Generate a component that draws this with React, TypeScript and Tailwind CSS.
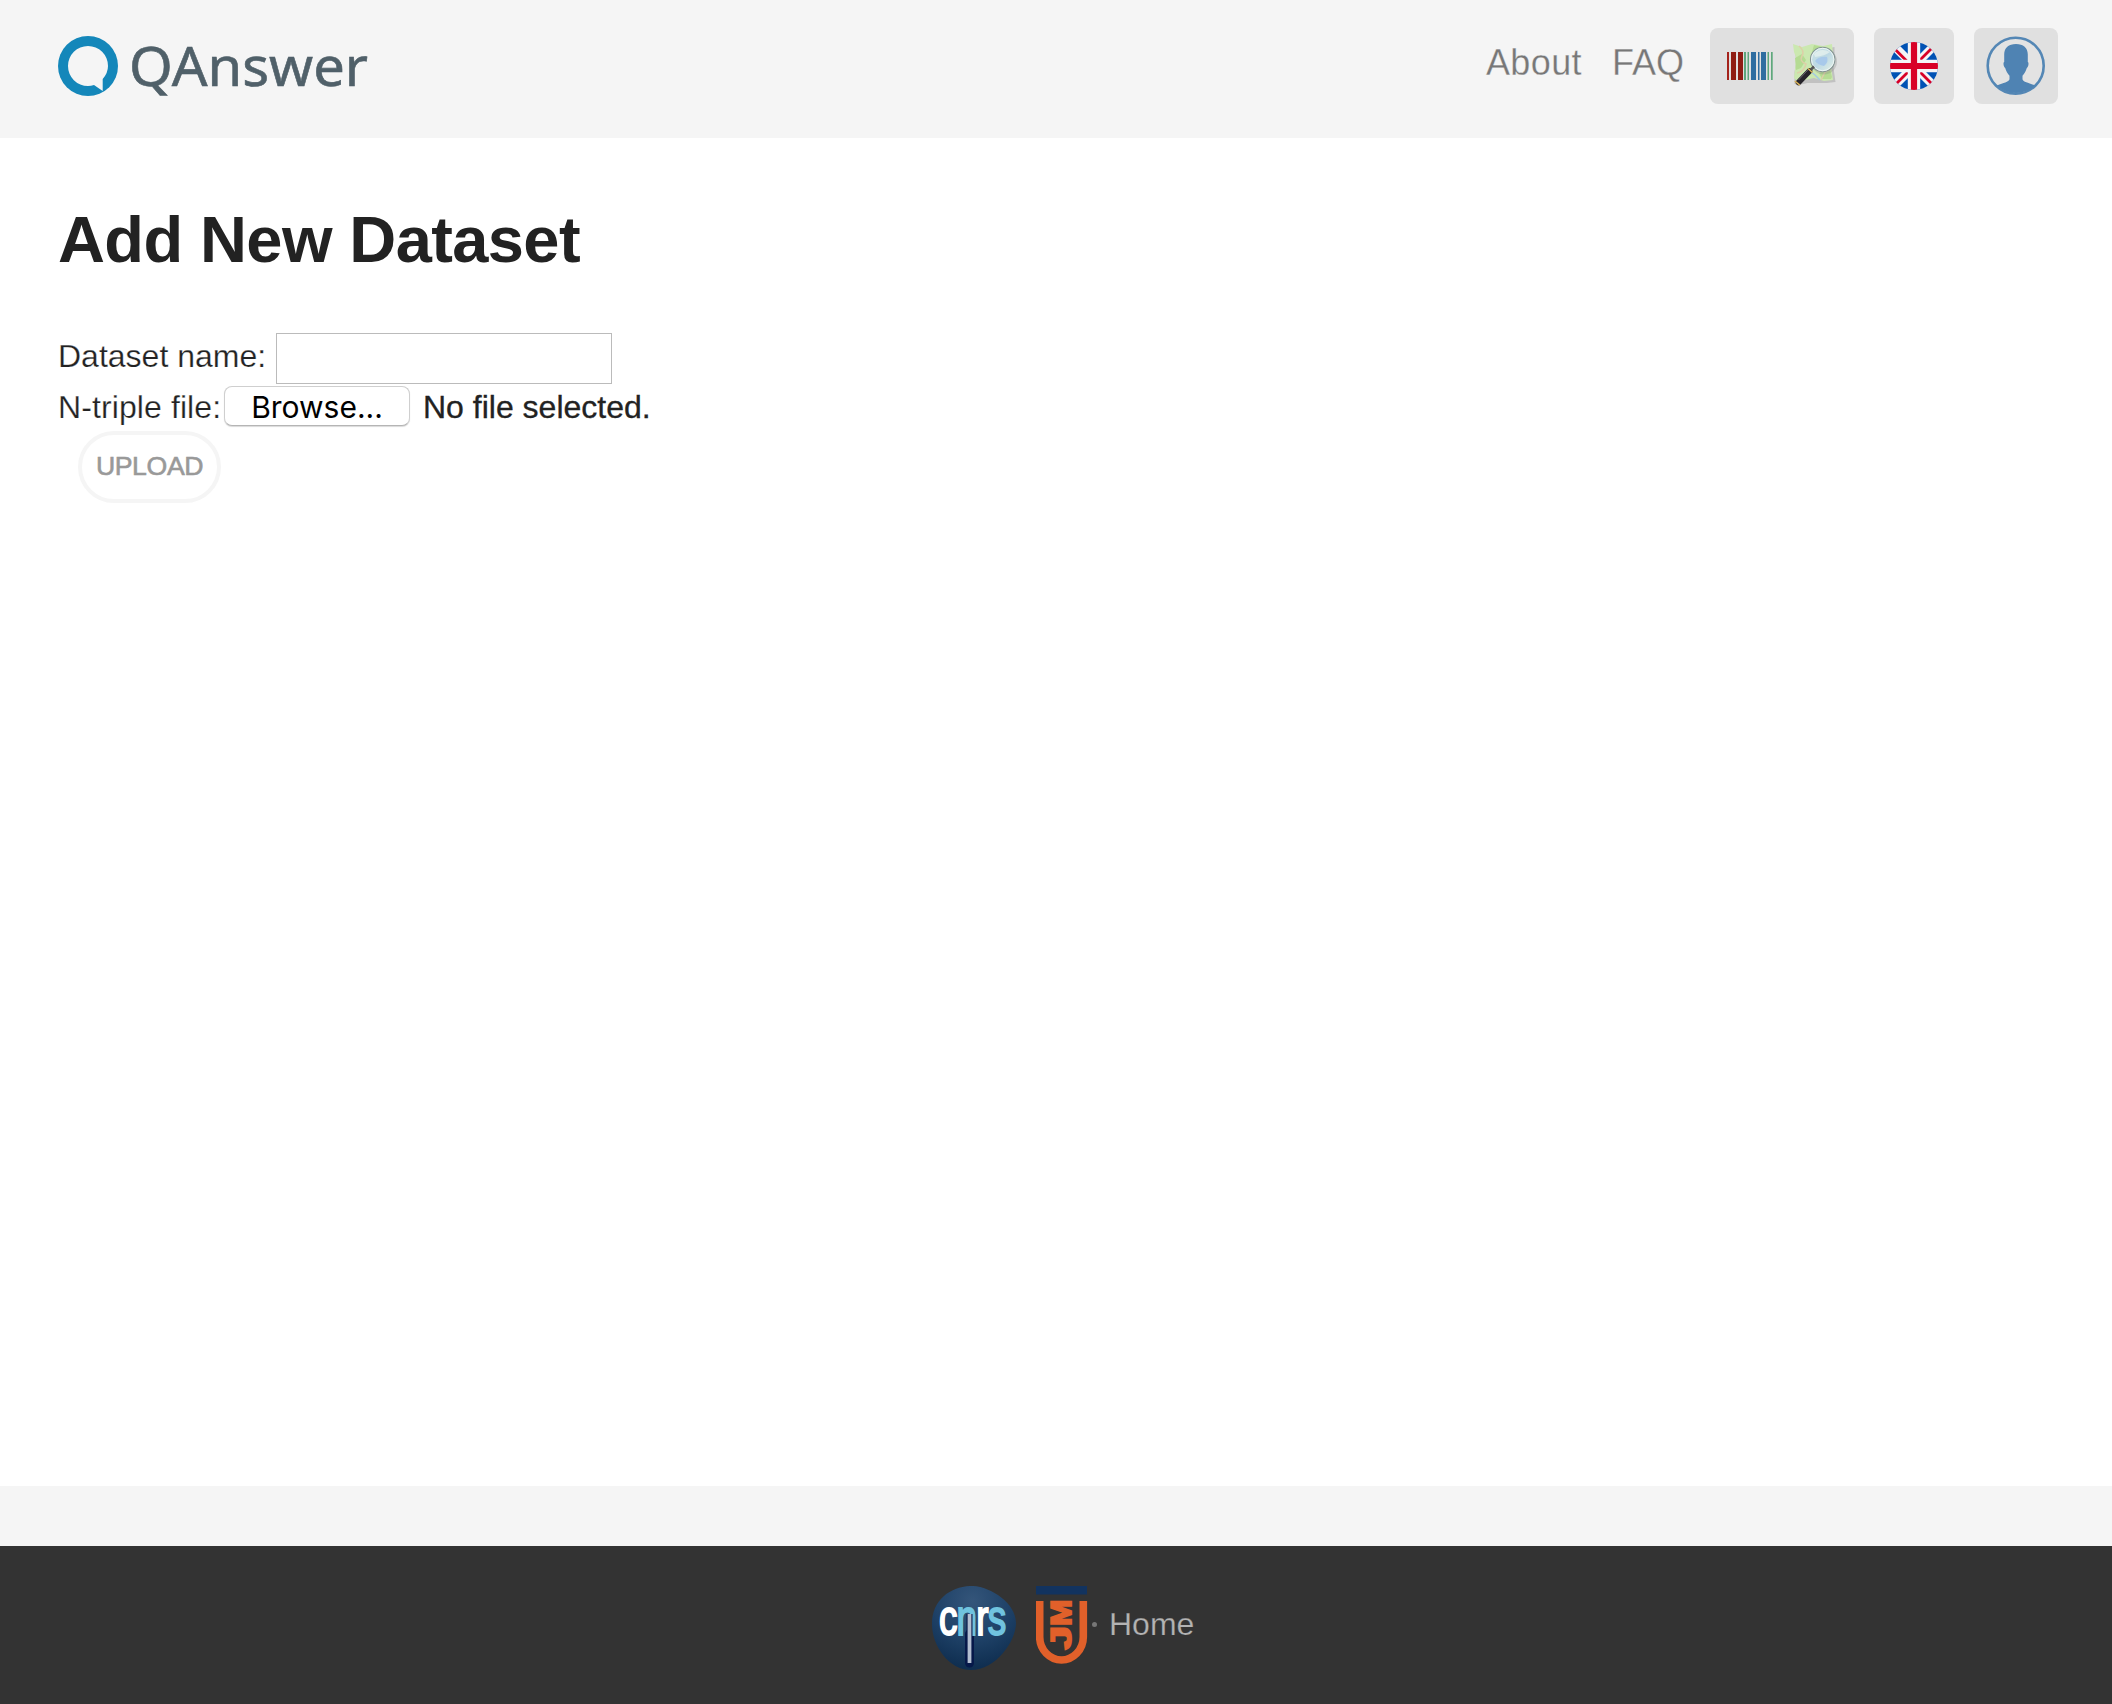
import React from 'react';

const BARS: [number, number, string][] = [
  [0, 2, '#a4221b'], [4, 5, '#8f1d14'], [11, 5, '#8f1d14'], [17, 2, '#5fa87c'], [20.5, 1.5, '#5fa87c'],
  [24, 5, '#2f6da0'], [31, 1.5, '#2f6da0'], [34, 5, '#2f6da0'], [40.5, 1.5, '#5fa87c'], [44, 1.7, '#5fa87c'],
];

function Logo() {
  return (
    <svg className="block h-[84px] w-[330px]" viewBox="58 22 330 84">
      <circle cx="88" cy="66" r="30" fill="#1487ba" />
      <path
        d="M88 46A20 20 0 0 1 108 66Q108 73 102.700 79V91L94 85Q91 86 88 86A20 20 0 0 1 88 46Z"
        fill="#f5f5f5"
      />
      <text x="129" y="85.500" fontFamily="Noto Sans, sans-serif" fontSize="54.500" fill="#506069" stroke="#506069" strokeWidth="0.600" textLength="239" lengthAdjust="spacingAndGlyphs">
        QAnswer
      </text>
    </svg>
  );
}

function Barcode() {
  return (
    <svg className="block h-7 w-[46px]" viewBox="0 0 46 28">
      {BARS.map(([x, w, c]) => (
        <rect key={x} x={x} width={w} height="28" fill={c} />
      ))}
    </svg>
  );
}

function MapIcon() {
  return (
    <svg className="block h-12 w-12" viewBox="0 0 48 48">
      <defs>
        <linearGradient id="lens" x1="0" y1="0" x2="1" y2="1">
          <stop offset="0" stopColor="#cfe6e4" />
          <stop offset=".5" stopColor="#bcd8e4" />
          <stop offset="1" stopColor="#e6f2e6" />
        </linearGradient>
      </defs>
      <path d="M2 5l9 0 11-2 10 2 10-2 0 11-1 10 2 14-9 1-10 0-9 0-9 2-4-1 0-12 2-10z" fill="#888" opacity=".35" transform="translate(.5 2)" />
      <path d="M1 2l9 3 10-3 11 2 9-2 1 11-2 11 2 14-9 1-10-3-9 2-8 1-3-3 1-9 2-9-3-8z" fill="#cbe8b0" />
      <path d="M3 16l7-4 4 6-5 8-5 2zM22 3l8 2-3 6-7-1zM27 31l11-4 2 8-1 2-9 0z" fill="#b5db93" />
      <path d="M7 4q6 5 3 10t4 8q-2 8-9 9M29 38l4-8 6-3" fill="none" stroke="#ddcfa8" strokeWidth="1.500" />
      <path d="M17 28l6 5 5 5" fill="none" stroke="#a5c9e0" strokeWidth="1.500" />
      <circle cx="32" cy="19.500" r="13" fill="#777" opacity=".25" />
      <circle cx="30.700" cy="17.500" r="12.200" fill="url(#lens)" stroke="#849392" strokeWidth="1.100" />
      <circle cx="30.700" cy="17.500" r="11.200" fill="none" stroke="#eef6f4" strokeWidth="1" />
      <path d="M23 19q4-5 12-4 2 5-3 9-6-1-9-5z" fill="#a8c9ea" />
      <path d="M22 12q7-7 16-2-5 4-15 5z" fill="#e9f4ef" opacity=".7" />
      <path d="M17.500 29L6.500 40.500" stroke="#26232a" strokeWidth="5.600" strokeLinecap="round" />
      <path d="M16 27.800L6.500 38" stroke="#66616c" strokeWidth="1" />
      <path d="M16 26.500l4.500 4M2.800 39l5 4.200" stroke="#d9b35a" strokeWidth="1.600" />
      <path d="M19 27.500l3-3" stroke="#555" strokeWidth="2.500" />
    </svg>
  );
}

function Flag() {
  return (
    <svg className="block size-12" viewBox="0 0 48 48">
      <defs>
        <clipPath id="disc">
          <circle cx="24" cy="24" r="24" />
        </clipPath>
      </defs>
      <g clipPath="url(#disc)">
        <rect width="48" height="48" fill="#0052b4" />
        <path d="M0 0L48 48M48 0L0 48" stroke="#f4f4f6" strokeWidth="8.500" />
        <path d="M5 7.200L24 26.200M24 24L43 43M43 5L24 24M5 43L24 24" stroke="#d80027" strokeWidth="2.800" />
        <path d="M24 0V48M0 24H48" stroke="#f4f4f6" strokeWidth="12.400" />
        <path d="M24 0V48M0 24H48" stroke="#d80027" strokeWidth="6.200" />
      </g>
    </svg>
  );
}

function Avatar() {
  return (
    <svg className="block size-[60px]" viewBox="0 0 60 60">
      <circle cx="29.700" cy="29.700" r="28" fill="#e3e3e3" stroke="#5487b5" strokeWidth="2.600" />
      <path
        d="M30 8c7.500 0 12 4 11.800 11v7c1.300.5.700 4.800-1 6-1 3.300-2.200 5.500-4.300 7.800v3.400c.8 3 6 3.300 12.500 6.300A28 28 0 0 1 11 49.500c6.500-3 11.700-3.300 12.500-6.300v-3.400c-2.100-2.300-3.300-4.500-4.300-7.800-1.700-1.200-2.300-5.500-1-6v-7C18 12 22.500 8 30 8z"
        fill="#4f83b3"
      />
    </svg>
  );
}

function Cnrs() {
  return (
    <svg className="block h-[84px] w-[84px]" viewBox="0 0 84 84">
      <defs>
        <radialGradient id="globe" cx=".48" cy=".18" r=".8">
          <stop offset="0" stopColor="#34557a" />
          <stop offset=".55" stopColor="#1f4268" />
          <stop offset="1" stopColor="#0f2e50" />
        </radialGradient>
      </defs>
      <path d="M38 0C56-1 84 16 84 37C84 55 64 84 39 84C17 84 0 60 0 38C0 14 18 1 38 0Z" fill="url(#globe)" />
      <path d="M37.500 48V77" stroke="#06194a" strokeWidth="9" strokeLinecap="round" />
      <text
        transform="translate(7 48.500) scale(.74 1)"
        fontFamily="Liberation Sans, sans-serif"
        fontSize="50"
        fontWeight="400"
        letterSpacing="-1.200"
        strokeWidth="2"
      >
        <tspan fill="#fff" stroke="#fff">c</tspan>
        <tspan fill="#70c3df" stroke="#70c3df">n</tspan>
        <tspan fill="#fff" stroke="#fff">r</tspan>
        <tspan fill="#70c3df" stroke="#70c3df">s</tspan>
      </text>
      <path d="M37.500 28V77" stroke="#06194a" strokeWidth="6" />
      <path d="M37.500 28V77" stroke="#b3bed0" strokeWidth="3.800" />
    </svg>
  );
}

function Ujm() {
  return (
    <svg className="block h-[80px] w-[52px]" viewBox="0 0 52 80">
      <rect width="51" height="8.500" fill="#12335f" />
      <path d="M3.700 15V51C3.700 64 14 74 25.500 74S47.300 64 47.300 51V15" fill="none" stroke="#e1602a" strokeWidth="7.600" />
      <g
        transform="translate(35 63.500) rotate(-90)"
        fontFamily="Liberation Sans, sans-serif"
        fontSize="29"
        fontWeight="700"
        fill="#e1602a"
        stroke="#e1602a"
        strokeWidth="1.800"
      >
        <text textLength="23.500" lengthAdjust="spacingAndGlyphs">J</text>
        <text x="23.500" textLength="26.500" lengthAdjust="spacingAndGlyphs">M</text>
      </g>
    </svg>
  );
}

export default function App() {
  return (
    <div className="flex h-[1704px] w-[2112px] flex-col overflow-hidden bg-white font-['Liberation_Sans',Arial,sans-serif] text-[#222]">
      <header className="flex h-[138px] items-start justify-between bg-[#f5f5f5] pr-[54px] pl-[58px]">
        <div className="pt-[22px]">
          <Logo />
        </div>
        <nav className="flex pt-7">
          <a className="mr-[30px] pt-[15px] text-[36px] leading-[40px] tracking-[0.4px] text-[#777] [-webkit-text-stroke:0.3px_#f5f5f5]">About</a>
          <a className="mr-[26px] pt-[15px] text-[36px] leading-[40px] text-[#777] [-webkit-text-stroke:0.3px_#f5f5f5]">FAQ</a>
          <div className="mr-5 flex h-[76px] w-36 items-center rounded-lg bg-[#e0e0e0] pl-[17px]">
            <Barcode />
            <div className="ml-[19px]">
              <MapIcon />
            </div>
          </div>
          <div className="mr-5 flex h-[76px] w-20 items-center justify-center rounded-lg bg-[#e0e0e0]">
            <Flag />
          </div>
          <div className="flex h-[76px] w-[84px] items-center justify-center rounded-lg bg-[#e0e0e0]">
            <Avatar />
          </div>
        </nav>
      </header>

      <main className="flex-1 px-[58px] pt-[66px] text-[32px]">
        <h1 className="h-[129px] text-[65px] leading-[71px] font-bold tracking-[-0.6px]">Add New Dataset</h1>
        <div className="flex h-[51px]">
          <label className="w-[218px] pt-[5px] leading-[36px] whitespace-nowrap [-webkit-text-stroke:0.25px_#fff]">Dataset name:</label>
          <input className="h-[51px] w-[336px] border border-[#bbb] bg-white px-2 outline-none" />
        </div>
        <div className="flex h-[47px] pt-[2px]">
          <label className="w-[166px] pt-[3px] leading-[36px] tracking-[0.1px] whitespace-nowrap [-webkit-text-stroke:0.25px_#fff]">N-triple file:</label>
          <button className="h-10 w-[186px] rounded-lg border border-[#cfcfcf] border-b-[#b5b5b5] bg-white text-center font-['Inter',sans-serif] text-[30px] leading-[40px] text-black shadow-[0_1px_1px_rgba(0,0,0,0.15)]">
            Browse...
          </button>
          <span className="ml-[13px] pt-[3px] leading-[36px] [-webkit-text-stroke:0.3px_#222]">No file selected.</span>
        </div>
        <button className="ml-5 flex h-[72px] w-[143px] items-center justify-center rounded-full border-4 border-[#f5f5f5] bg-white pb-[3px] text-[26.67px] tracking-[-0.4px] text-[#999] [-webkit-text-stroke:0.6px_#999]">
          UPLOAD
        </button>
      </main>

      <div className="h-[60px] bg-[#f5f5f5]" />
      <footer className="flex h-[158px] items-start bg-[#333] pt-10 pl-[932px]">
        <Cnrs />
        <div className="ml-5">
          <Ujm />
        </div>
        <span className="mt-[36px] ml-[4px] size-[5px] rounded-full bg-[#777]" />
        <a className="ml-[12px] pt-[20px] text-[32px] leading-[36px] text-[#b3b3b3] [-webkit-text-stroke:0.25px_#333]">Home</a>
      </footer>
    </div>
  );
}
